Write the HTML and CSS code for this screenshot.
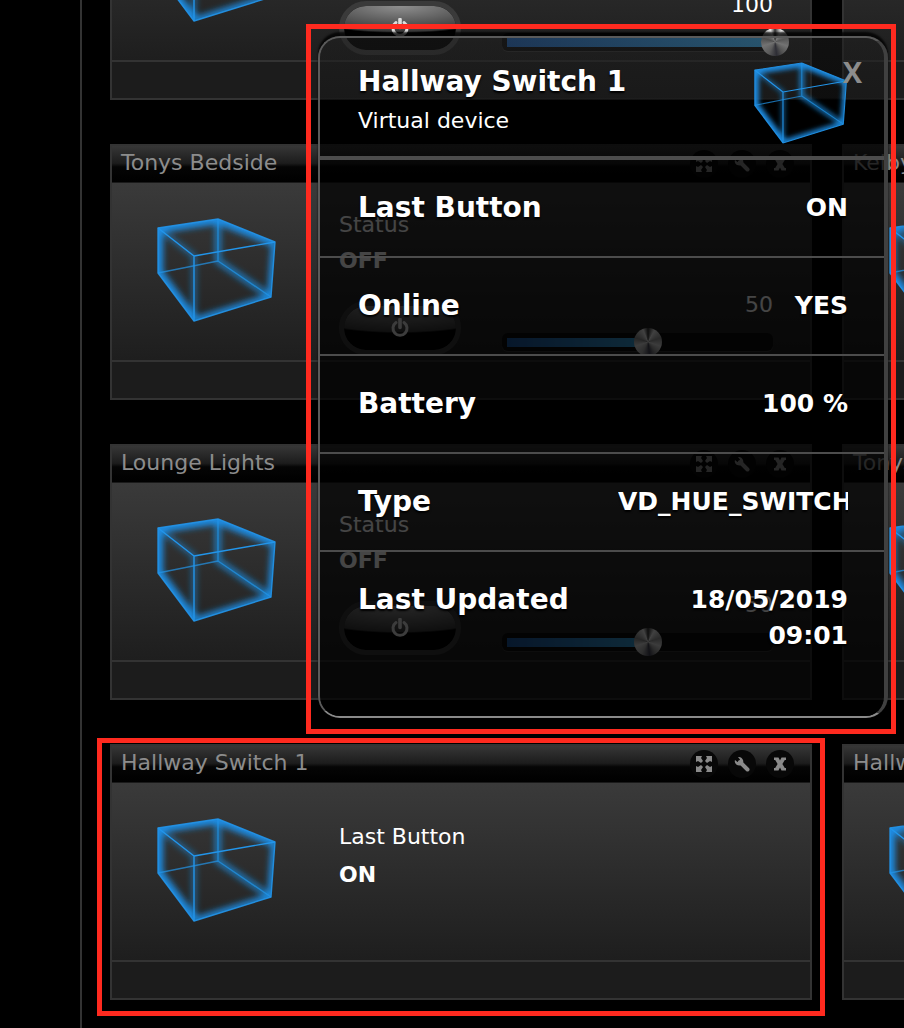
FILE: index.html
```html
<!DOCTYPE html>
<html lang="en">
<head>
<meta charset="utf-8">
<title>Devices</title>
<link rel="stylesheet" href="styles.css">
</head>
<body>
<svg class="defs" aria-hidden="true">
  <defs>
    <clipPath id="hull"><path d="M1 10 61 1 118 24 114 79 37 103 1 55Z"/></clipPath>
    <filter id="glow" x="-20%" y="-20%" width="140%" height="140%"><feGaussianBlur stdDeviation="3.200"/></filter>
  </defs>
  <symbol id="cube" viewBox="0 0 120 104">
    <g clip-path="url(#hull)">
      <g filter="url(#glow)" fill="none" stroke="#1c8ee6" stroke-width="10">
        <path d="M118 24 61 1 1 10V55L37 103"/>
        <path d="M37 103 114 79 118 24" stroke-width="7"/>
        <path d="M61 1V43L114 79" stroke-width="6" stroke-opacity=".8"/>
        <path d="M1 10 37 38V103" stroke-width="4" stroke-opacity=".7"/>
      </g>
    </g>
    <g fill="none" stroke="#2295ea" stroke-width="1.4" stroke-linejoin="round">
      <path d="M1 10 61 1 118 24 114 79 37 103 1 55Z" stroke-opacity=".9"/>
      <path d="M1 10 37 38 118 24M37 38V103"/>
      <path d="M1 55 61 43 114 79M61 1V43" stroke-opacity=".7"/>
    </g>
  </symbol>
  <symbol id="power" viewBox="0 0 20 20">
    <path d="M6 4.500A7 7 0 1 0 14 4.500" fill="none" stroke="currentColor" stroke-width="3" stroke-linecap="round"/>
    <path d="M10 1.500V9.500" fill="none" stroke="currentColor" stroke-width="3.600" stroke-linecap="round"/>
  </symbol>
  <symbol id="expand" viewBox="0 0 16 16">
    <path d="M0 0H6L5 2 7 5 5 7 2 5 0 6ZM16 0H10L11 2 9 5 11 7 14 5 16 6ZM0 16H6L5 14 7 11 5 9 2 11 0 10ZM16 16H10L11 14 9 11 11 9 14 11 16 10Z" fill="currentColor"/>
  </symbol>
  <symbol id="wrench" viewBox="0 0 16 16">
    <path d="M6 6 13.500 13.500" stroke="currentColor" stroke-width="4" stroke-linecap="round"/>
    <path d="M4 1 6 3.500 5.500 5.500 3.500 6 1 4C0 6.500 2 9.500 5.500 9.500 8.500 9.500 10 6.500 9 4 8 1.500 6 .5 4 1Z" fill="currentColor"/>
  </symbol>
  <symbol id="cross" viewBox="0 0 16 16">
    <path d="M2 1.500H6.500L8 4.500 9.500 1.500H14V4H12.800L10.400 8 12.800 12H14V14.500H9.500L8 11.500 6.500 14.500H2V12H3.200L5.600 8 3.200 4H2Z" fill="currentColor"/>
  </symbol>
</svg>

<div class="page">
  <aside class="sidebar"></aside>
  <main class="devices">
    <article class="card">
      <header class="card-head"></header>
      <div class="card-body">
        <svg class="cube"><use href="#cube"/></svg>
        <div class="info">
          <div class="controls">
            <button class="power" aria-label="Toggle power"><svg><use href="#power"/></svg></button>
            <div class="dimmer">
              <label for="dim1">100</label>
              <div class="track"><input id="dim1" type="range" value="100" style="--level:100%"></div>
            </div>
          </div>
        </div>
      </div>
      <footer class="card-foot"></footer>
    </article>
    <article class="card">
      <header class="card-head"></header>
      <div class="card-body"><svg class="cube"><use href="#cube"/></svg></div>
      <footer class="card-foot"></footer>
    </article>

    <article class="card">
      <header class="card-head">
        <h2>Tonys Bedside</h2>
        <button class="tool" aria-label="Expand"><svg><use href="#expand"/></svg></button>
        <button class="tool" aria-label="Settings"><svg><use href="#wrench"/></svg></button>
        <button class="tool" aria-label="Remove"><svg><use href="#cross"/></svg></button>
      </header>
      <div class="card-body">
        <svg class="cube"><use href="#cube"/></svg>
        <div class="info">
          <p>Status</p>
          <p class="state">OFF</p>
          <div class="controls">
            <button class="power" aria-label="Toggle power"><svg><use href="#power"/></svg></button>
            <div class="dimmer">
              <label for="dim2">50</label>
              <div class="track"><input id="dim2" type="range" value="50" style="--level:50%"></div>
            </div>
          </div>
        </div>
      </div>
      <footer class="card-foot"></footer>
    </article>
    <article class="card">
      <header class="card-head"><h2>Kelbys</h2></header>
      <div class="card-body"><svg class="cube"><use href="#cube"/></svg></div>
      <footer class="card-foot"></footer>
    </article>

    <article class="card">
      <header class="card-head">
        <h2>Lounge Lights</h2>
        <button class="tool" aria-label="Expand"><svg><use href="#expand"/></svg></button>
        <button class="tool" aria-label="Settings"><svg><use href="#wrench"/></svg></button>
        <button class="tool" aria-label="Remove"><svg><use href="#cross"/></svg></button>
      </header>
      <div class="card-body">
        <svg class="cube"><use href="#cube"/></svg>
        <div class="info">
          <p>Status</p>
          <p class="state">OFF</p>
          <div class="controls">
            <button class="power" aria-label="Toggle power"><svg><use href="#power"/></svg></button>
            <div class="dimmer">
              <label for="dim3">50</label>
              <div class="track"><input id="dim3" type="range" value="50" style="--level:50%"></div>
            </div>
          </div>
        </div>
      </div>
      <footer class="card-foot"></footer>
    </article>
    <article class="card">
      <header class="card-head"><h2>Tonys</h2></header>
      <div class="card-body"><svg class="cube"><use href="#cube"/></svg></div>
      <footer class="card-foot"></footer>
    </article>

    <article class="card">
      <header class="card-head">
        <h2>Hallway Switch 1</h2>
        <button class="tool" aria-label="Expand"><svg><use href="#expand"/></svg></button>
        <button class="tool" aria-label="Settings"><svg><use href="#wrench"/></svg></button>
        <button class="tool" aria-label="Remove"><svg><use href="#cross"/></svg></button>
      </header>
      <div class="card-body">
        <svg class="cube"><use href="#cube"/></svg>
        <div class="info info-simple">
          <p>Last Button</p>
          <p class="state">ON</p>
        </div>
      </div>
      <footer class="card-foot"></footer>
    </article>
    <article class="card">
      <header class="card-head"><h2>Hallway</h2></header>
      <div class="card-body"><svg class="cube"><use href="#cube"/></svg></div>
      <footer class="card-foot"></footer>
    </article>
  </main>

  <section class="popup" role="dialog" aria-labelledby="popup-title">
    <header class="popup-head">
      <div>
        <h1 id="popup-title">Hallway Switch 1</h1>
        <p>Virtual device</p>
      </div>
      <svg class="popup-cube"><use href="#cube"/></svg>
      <button class="close" aria-label="Close">X</button>
    </header>
    <dl>
      <div class="row"><dt>Last Button</dt><dd>ON</dd></div>
      <div class="row"><dt>Online</dt><dd>YES</dd></div>
      <div class="row"><dt>Battery</dt><dd>100 %</dd></div>
      <div class="row"><dt>Type</dt><dd>VD_HUE_SWITCH</dd></div>
      <div class="row"><dt>Last Updated</dt><dd>18/05/2019 09:01</dd></div>
    </dl>
  </section>
  <div class="mark mark-popup"></div>
  <div class="mark mark-card"></div>
</div>
</body>
</html>
```

FILE: styles.css
```css
* { box-sizing: border-box; }

body {
  margin: 0;
  background: #000;
  color: #fff;
  font-family: Verdana, "DejaVu Sans", sans-serif;
  font-size: 22px;
}

h1, h2, p, dl, dd { margin: 0; }
button { padding: 0; border: 0; cursor: pointer; }
.defs { position: absolute; width: 0; height: 0; }

.page {
  position: relative;
  display: flex;
  min-height: 100vh;
  overflow: hidden;
}

.sidebar {
  flex: 0 0 82px;
  border-right: 2px solid #333;
}

/* The list is scrolled part of the way through its first row. */
.devices {
  flex: 1;
  display: grid;
  grid-template-columns: repeat(2, minmax(702px, 1fr));
  align-content: start;
  gap: 44px 30px;
  margin-top: -156px;
  padding: 0 28px 28px;
}

.card {
  display: flex;
  flex-direction: column;
  height: 256px;
  border: 2px solid #333;
}

.card-head {
  display: flex;
  align-items: center;
  gap: 10px;
  flex: 0 0 37px;
  padding: 0 16px 0 9px;
  border-bottom: 1px solid #1a1a1a;
  background: linear-gradient(#363636, #1c1c1c 48%, #050505 58%, #000);
}

.card-head h2 {
  flex: 1;
  padding-bottom: 2px;
  color: #8c8c8c;
  font-size: 22px;
  font-weight: 400;
  line-height: 28px;
}

.tool {
  display: grid;
  place-items: center;
  width: 28px;
  height: 28px;
  border-radius: 50%;
  background: #080808;
  color: #8a8a8a;
}

.tool svg { width: 16px; height: 16px; }

.card-body {
  display: flex;
  flex: 1;
  background: linear-gradient(#3a3a3a, #1e1e1e);
}

.cube {
  flex: none;
  width: 120px;
  height: 104px;
  margin: 35px 62px 0 45px;
}

.info { flex: 1; padding-top: 24px; }
.info p { line-height: 36px; }
.info-simple { padding-top: 35px; }
.info-simple p { line-height: 38px; }
.info .state { font-weight: 700; }
.controls:first-child { margin-top: 72px; }

.card-foot {
  flex: 0 0 38px;
  border-top: 2px solid #333;
  background: #1c1c1c;
}

.controls {
  display: flex;
  gap: 41px;
  padding-top: 12px;
}

.power {
  display: grid;
  place-items: center;
  width: 122px;
  height: 54px;
  margin-top: 10px;
  border: 5px solid #3a3a3a;
  border-radius: 27px;
  background: radial-gradient(ellipse 100% 62% at 50% 0, #909090, #3a3a3a 94%, #000 100%) padding-box;
  color: #ddd;
}

.power svg { width: 20px; height: 20px; }

.dimmer { width: 271px; }

.dimmer label {
  display: block;
  line-height: 28px;
  text-align: right;
}

.track {
  height: 18px;
  margin-top: 14px;
  padding-left: 5px;
  border-radius: 6px;
  background: #0c0c0c;
  box-shadow: 0 1px 0 #333;
}

.track input {
  display: block;
  width: 282px;
  height: 18px;
  margin: 0;
  appearance: none;
  background: linear-gradient(90deg, #1c559c, #3498d0) 0 5px / calc(var(--level) - 12px) 9px no-repeat;
}

.track input::-webkit-slider-thumb {
  appearance: none;
  width: 28px;
  height: 28px;
  border-radius: 50%;
  background: conic-gradient(#333, #eee 8%, #999 20%, #ddd 30%, #999 40%, #445 48%, #aaa 58%, #ddd 70%, #888 80%, #eee 94%, #333);
}

.popup {
  position: absolute;
  top: 36px;
  left: 318px;
  display: flex;
  flex-direction: column;
  width: 570px;
  min-height: 682px;
  overflow: hidden;
  border: 2px solid #5a5a5a;
  border-right: 4px solid #404040;
  border-bottom-color: #8a8a8a;
  border-radius: 22px;
  box-shadow: 0 -4px 2px rgba(0, 0, 0, .8);
  text-shadow: 0 2px 2px #000;
}

.popup-head {
  display: flex;
  justify-content: space-between;
  flex: 0 0 122px;
  padding: 24px 36px 0 38px;
  border-bottom: 4px solid #4c4c4c;
  background: linear-gradient(rgba(30, 30, 30, .55), rgba(24, 24, 24, .6) 60px, rgba(0, 0, 0, .74) 62px);
}

.popup h1 { font-size: 28px; line-height: 40px; }
.popup-head p { line-height: 38px; }

.popup-cube {
  width: 94px;
  height: 82px;
}

.close {
  position: absolute;
  top: 16px;
  right: 22px;
  background: none;
  color: #8c8c8c;
  font: 700 29px/36px "Open Sans", sans-serif;
}

.popup dl {
  flex: 1;
  background: rgba(0, 0, 0, .73);
}

.row {
  display: flex;
  justify-content: space-between;
  min-height: 98px;
  padding: 28px 36px 0 38px;
  border-bottom: 2px solid #4c4c4c;
}

.row:last-child { border-bottom: 0; }

.row dt {
  font-size: 28px;
  font-weight: 700;
  line-height: 40px;
}

.row dd {
  width: 230px;
  padding-top: 2px;
  overflow: hidden;
  font-size: 25px;
  font-weight: 700;
  line-height: 36px;
  text-align: right;
}

.mark {
  position: absolute;
  border: 5px solid #ff2a1f;
  pointer-events: none;
}

.mark-popup { top: 24px; left: 306px; width: 590px; height: 710px; }
.mark-card { top: 738px; left: 97px; width: 728px; height: 278px; }
```
